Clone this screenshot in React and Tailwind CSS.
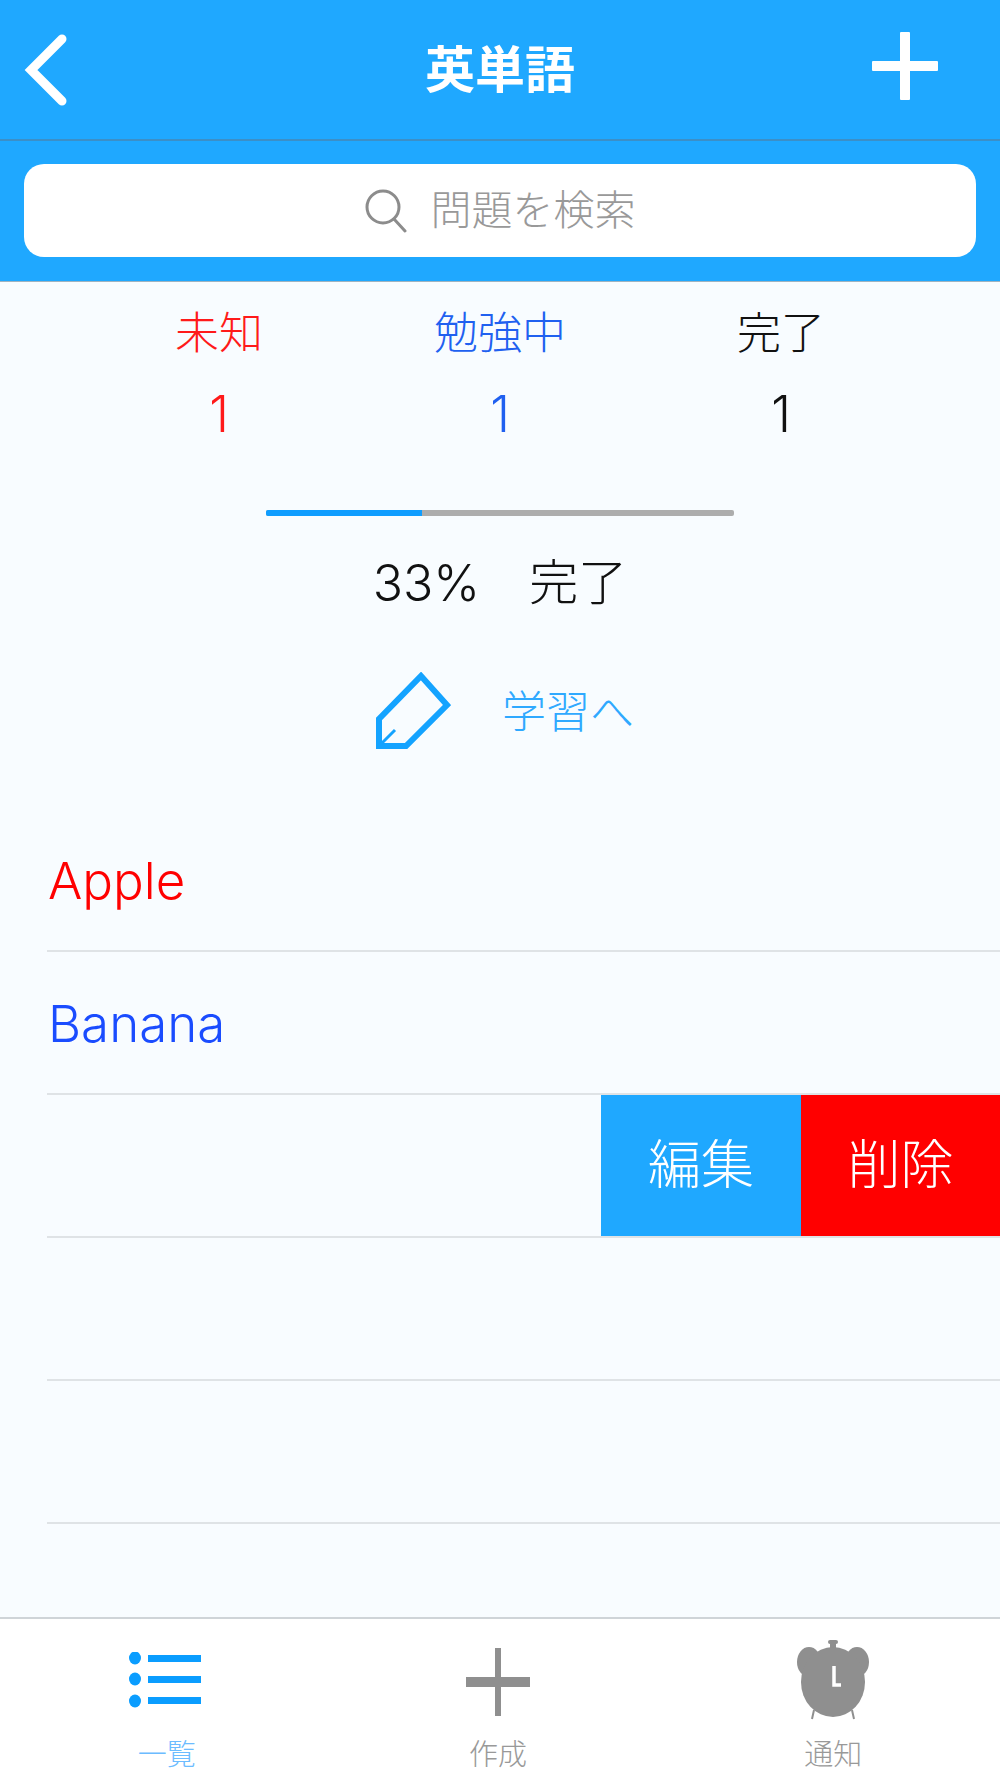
const font = { fontFamily: '"Inter", "Noto Sans CJK JP", sans-serif' };

const stats = [
  { label: "未知", value: 1, color: "text-[#ff1a1a]" },
  { label: "勉強中", value: 1, color: "text-[#2060f0]" },
  { label: "完了", value: 1, color: "text-[#111111]" },
];

const rows = [
  { text: "Apple", color: "text-[#ff0000]" },
  { text: "Banana", color: "text-[#1a4cff]" },
  { actions: true },
  {},
  {},
];

function ListIcon() {
  return (
    <svg width="72" height="56" viewBox="0 0 72 56" fill="#0a9dff" className="mr-[4px]">
      <ellipse cx="6" cy="6" rx="6" ry="6.5" />
      <ellipse cx="6" cy="27" rx="6" ry="6.5" />
      <ellipse cx="6" cy="49" rx="6" ry="6.5" />
      <rect x="19" y="3" width="53" height="7" />
      <rect x="19" y="24" width="53" height="7" />
      <rect x="19" y="45" width="53" height="7" />
    </svg>
  );
}

function AlarmIcon() {
  return (
    <svg width="72" height="80" viewBox="0 0 72 80" fill="#8f8f8f">
      <rect x="33" y="0" width="6" height="12" rx="2" />
      <rect x="31" y="0" width="10" height="4" rx="2" />
      <ellipse cx="12" cy="22" rx="12" ry="15" />
      <ellipse cx="60" cy="22" rx="12" ry="15" />
      <ellipse cx="36" cy="42" rx="32" ry="35" />
      <path d="M17 70 L15 79 M55 70 L57 79" stroke="#8f8f8f" strokeWidth="2" />
      <path d="M37 26 V45 H44" stroke="#ffffff" strokeWidth="3.5" fill="none" />
    </svg>
  );
}

function TabItem({ icon, label, color, className }) {
  return (
    <div className={`flex flex-col items-center ${className}`}>
      <div className="h-[78px] mt-[2px] flex items-center justify-center">{icon}</div>
      <span className={`mt-[19px] text-[29px] leading-[34px] font-light ${color}`}>{label}</span>
    </div>
  );
}

export default function App() {
  return (
    <div className="w-[1000px] h-[1778px] flex flex-col bg-[#f8fcff] overflow-hidden" style={font}>
      <header className="h-[141px] shrink-0 bg-[#1fa8ff] border-b-2 border-[#3b8fc7] flex items-center justify-between pl-[24px] pr-[62px]">
        <div className="w-[104px]">
          <svg width="46" height="74" viewBox="0 0 46 74" fill="none" stroke="#ffffff" strokeWidth="9" strokeLinecap="round" strokeLinejoin="miter">
            <path d="M38 6 L7 37 L38 68" />
          </svg>
        </div>
        <h1 className="text-[50px] leading-none font-bold text-white">英単語</h1>
        <svg width="66" height="68" viewBox="0 0 66 68" fill="#ffffff" className="mt-[-8px]">
          <rect x="28" y="0" width="10" height="68" rx="1" />
          <rect x="0" y="29" width="66" height="10" rx="1" />
        </svg>
      </header>

      <div className="h-[141px] shrink-0 bg-[#1fa8ff] border-b border-[#9fb3c0] px-[24px] pt-[23px]">
        <div className="h-[93px] rounded-[20px] bg-white flex items-center justify-center gap-[24px] text-[#999999]">
          <svg width="42" height="44" viewBox="0 0 42 44" fill="none" stroke="#8c8c8c" strokeWidth="3" strokeLinecap="round">
            <circle cx="18" cy="18" r="16" />
            <path d="M29 30 L40 42" />
          </svg>
          <span className="text-[41px] leading-none font-light">問題を検索</span>
        </div>
      </div>

      <main className="flex-1 flex flex-col">
        <div className="grid grid-cols-3 w-[843px] mx-auto mt-[24px]">
          {stats.map((s) => (
            <div key={s.label} className={`flex flex-col items-center ${s.color}`}>
              <span className="text-[44px] leading-[54px] font-light">{s.label}</span>
              <span className="text-[50px] leading-[60px] mt-[24px] font-light">{s.value}</span>
            </div>
          ))}
        </div>

        <div className="w-[468px] h-[6px] mx-auto mt-[66px] flex rounded-[2px] overflow-hidden bg-[#adadad]">
          <div className="h-full bg-[#0f9dff] w-[156px]" />
        </div>

        <div className="flex justify-center gap-[49px] mt-[37px] text-[50px] leading-[60px] font-light text-[#111111]">
          <span>33%</span>
          <span className="text-[49px]">完了</span>
        </div>

        <div className="flex justify-center items-center gap-[51px] mt-[59px] ml-[9px]">
          <svg width="76" height="78" viewBox="0 0 76 78" fill="none" stroke="#14a3ff" strokeWidth="6">
            <path d="M46 4 L72 33 L31 74 L4 74 L4 47 Z" />
            <path d="M4 74 L20 58" strokeWidth="3" />
          </svg>
          <span className="text-[44px] leading-none font-light text-[#2fa9ff] mt-[2px]">学習へ</span>
        </div>

        <div className="ml-[47px] mt-[59px]">
          {rows.map((row, i) => (
            <div key={i} className="h-[143px] border-b-2 border-[#dfe3e6] flex items-center justify-between">
              {row.text && (
                <span className={`text-[51px] leading-none font-light ml-[1px] mt-[1px] ${row.color}`}>{row.text}</span>
              )}
              {row.actions && (
                <div className="ml-auto flex h-full text-white text-[53px] font-light">
                  <div className="w-[200px] bg-[#1fa8ff] flex items-center justify-center">編集</div>
                  <div className="w-[199px] bg-[#ff0000] flex items-center justify-center">削除</div>
                </div>
              )}
            </div>
          ))}
        </div>
      </main>

      <nav className="h-[161px] shrink-0 bg-white border-t-2 border-[#cfd4d8] grid grid-cols-3 pt-[20px]">
        <TabItem icon={<ListIcon />} label="一覧" color="text-[#6cbcff]" />
        <TabItem
          icon={
            <svg width="64" height="68" viewBox="0 0 64 68" fill="#8f8f8f" className="mt-[4px]">
              <rect x="29" y="0" width="6" height="68" />
              <rect x="0" y="29" width="64" height="10" />
            </svg>
          }
          label="作成"
          color="text-[#999999]"
          className="mr-[4px]"
        />
        <TabItem icon={<AlarmIcon />} label="通知" color="text-[#999999]" />
      </nav>
    </div>
  );
}
